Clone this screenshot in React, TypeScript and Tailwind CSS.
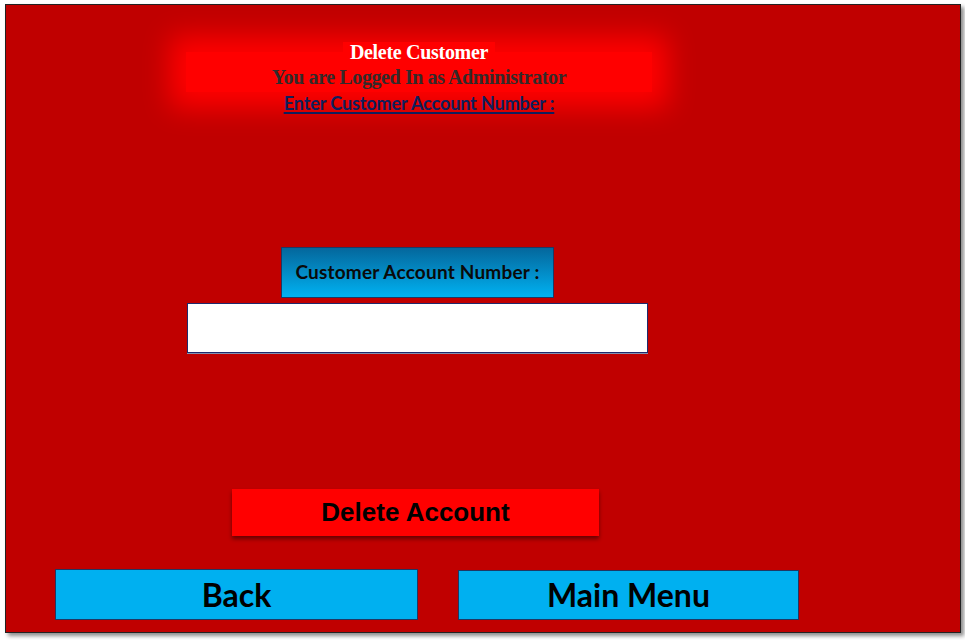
export default function App() {
  return (
    <div className="w-[965px] h-[640px] bg-white pt-[4px] pl-[5px]">
      <div className="w-[956px] h-[629px] bg-[#c00000] border border-[#222] shadow-[3px_3px_4px_rgba(0,0,0,0.45)] flex flex-col">
        {/* header with soft glow */}
        <div className="mt-[47px] ml-[180px] w-[466px] h-[40px] bg-[#ff0000] shadow-[0_0_28px_16px_#ff0000] flex flex-col items-center">
          <div className="-mt-[10px] bg-[#ff0000] px-[7px] h-[20px] flex items-center font-['Liberation_Serif',serif] font-bold text-[20px] text-white leading-none tracking-[-0.3px]">
            Delete Customer
          </div>
          <div className="mt-[3px] font-['Liberation_Serif',serif] font-bold text-[20px] leading-[24px] text-[#332a2a] tracking-[-0.4px]">
            You are Logged In as Administrator
          </div>
          <div className="mt-[3px] font-['Lato',sans-serif] font-bold text-[18px] leading-[22px] text-[#0f1f5c] underline decoration-2 underline-offset-2 tracking-[-0.1px]">
            Enter Customer Account Number :
          </div>
        </div>

        {/* label */}
        <div className="mt-[155px] ml-[275px] w-[273px] h-[51px] border border-[#1f3864] bg-gradient-to-b from-[#04679c] to-[#00b2f2] flex items-center justify-center">
          <span className="font-['Lato',sans-serif] font-bold text-[19px] text-[#0a0a0a] tracking-[0.2px]">
            Customer Account Number :
          </span>
        </div>

        {/* input */}
        <input
          type="text"
          className="mt-[5px] ml-[181px] w-[461px] h-[50px] bg-white border border-[#1f2a6c] shadow-[0_1px_0_#8090b0] outline-none"
        />

        {/* delete */}
        <div className="mt-[136px] ml-[226px]">
          <button className="w-[367px] h-[47px] bg-[#ff0000] shadow-[0_3px_4px_rgba(0,0,0,0.45)] font-['Liberation_Sans',sans-serif] font-bold text-[26px] text-black">
            Delete Account
          </button>
        </div>

        {/* bottom buttons */}
        <div className="mt-[33px] ml-[49px] flex items-start gap-[40px]">
          <button className="w-[363px] h-[51px] bg-[#00b0f0] border border-[#1f3864] font-['Lato',sans-serif] font-bold text-[32px] text-black">
            Back
          </button>
          <button className="w-[341px] h-[50px] mt-[1px] bg-[#00b0f0] border border-[#1f3864] font-['Lato',sans-serif] font-bold text-[32px] text-black">
            Main Menu
          </button>
        </div>
      </div>
    </div>
  );
}
